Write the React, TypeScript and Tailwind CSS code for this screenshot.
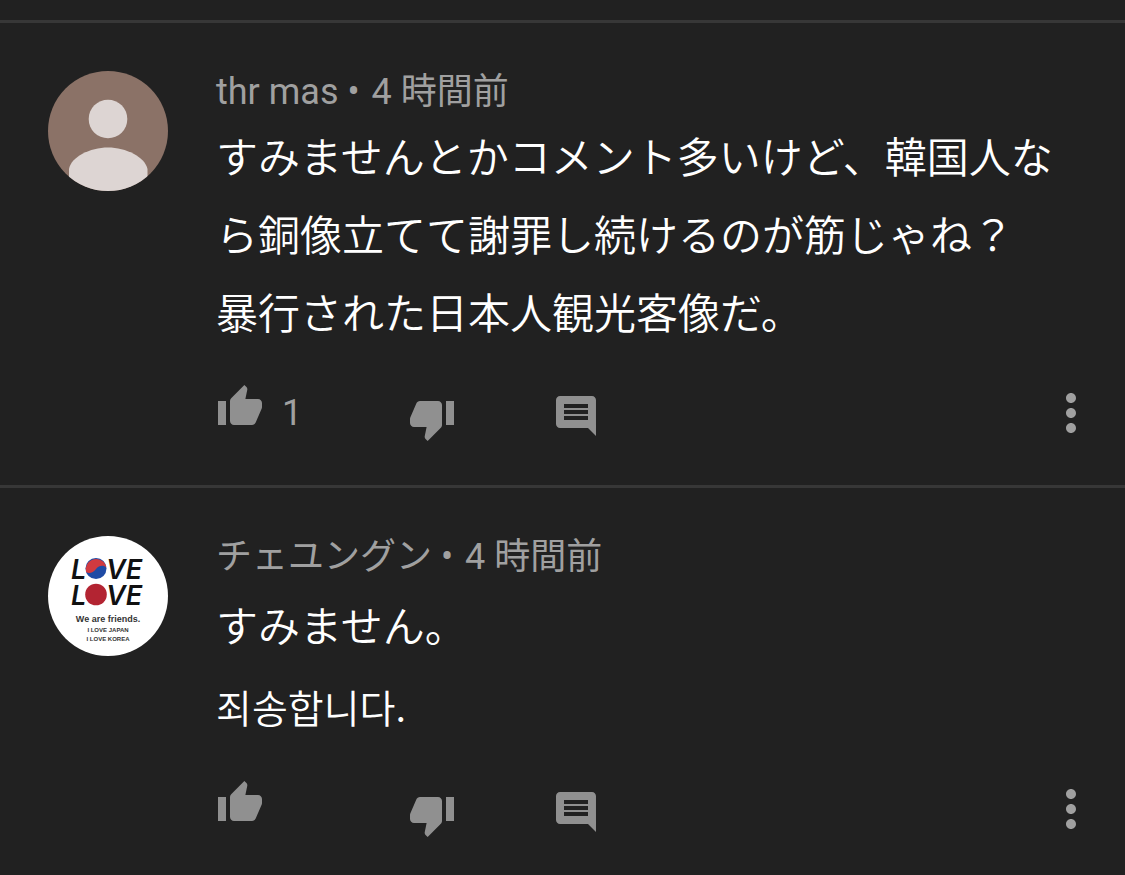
import type { ReactNode } from "react";

type CommentData = {
  id: string;
  author: string;
  time: string;
  likes?: number;
  avatar: ReactNode;
  body: ReactNode;
};

function DefaultAvatar() {
  return (
    <svg viewBox="0 0 120 120" className="block size-full" role="img" aria-label="thr mas">
      <rect width="120" height="120" fill="#8b7267" />
      <circle cx="60" cy="48" r="19.3" fill="#ddd5d3" />
      <path
        d="M21 120V98C23 86 42 76.500 60 76.500S97 86 99.500 98V120Z"
        fill="#ddd5d3"
      />
    </svg>
  );
}

function LoveAvatar() {
  return (
    <svg
      viewBox="0 0 120 120"
      className="block size-full font-['Liberation_Sans',sans-serif]"
      role="img"
      aria-label="チェユングン"
    >
      <rect width="120" height="120" fill="#fff" />
      <g
        fill="#111"
        className="font-['Inter',sans-serif]"
        fontSize="27"
        fontWeight="600"
        fontStyle="italic"
      >
        <text x="23" y="43">L</text>
        <text x="58" y="43">VE</text>
        <text x="23" y="69">L</text>
        <text x="58" y="69">VE</text>
      </g>
      <circle cx="48" cy="32.500" r="10.500" fill="#1f4ba5" />
      <path
        d="M38 36A10.500 10.500 0 1 1 58.500 31.500C56 29 51 29 48 33C45 37 41 38 38 36Z"
        fill="#d13a40"
      />
      <circle cx="48" cy="58.500" r="10.800" fill="#b32432" />
      <g fill="#333" textAnchor="middle" fontWeight="700">
        <text x="60" y="86" fontSize="9">We are friends.</text>
        <text x="60" y="96" fontSize="6">I LOVE JAPAN</text>
        <text x="60" y="105" fontSize="6">I LOVE KOREA</text>
      </g>
    </svg>
  );
}

function Icon({ d }: { d: string }) {
  return (
    <svg viewBox="0 0 24 24" className="block size-full" fill="currentColor" aria-hidden="true">
      <path d={d} />
    </svg>
  );
}

const THUMB_UP =
  "M1 21h4V9H1v12zm22-11c0-1.100-.9-2-2-2h-6.310l.95-4.570.03-.32c0-.41-.17-.79-.44-1.060L14.170 1 7.590 7.590C7.220 7.950 7 8.450 7 9v10c0 1.100.9 2 2 2h9c.83 0 1.540-.5 1.840-1.220l3.020-7.050c.09-.23.14-.47.14-.73v-2z";
const THUMB_DOWN =
  "M15 3H6c-.83 0-1.540.5-1.840 1.220l-3.020 7.050c-.09.23-.14.47-.14.73v2c0 1.100.9 2 2 2h6.310l-.95 4.570-.03.32c0 .41.17.79.44 1.060L9.830 23l6.590-6.590c.36-.36.58-.86.58-1.410V5c0-1.100-.9-2-2-2zm4 0v12h4V3h-4z";
const COMMENT =
  "M21.990 4c0-1.100-.89-2-1.990-2H4c-1.100 0-2 .9-2 2v12c0 1.100.9 2 2 2h14l4 4-.01-18zM18 14H6v-2h12v2zm0-3H6V9h12v2zm0-3H6V6h12v2z";
const MORE =
  "M12 8c1.100 0 2-.9 2-2s-.9-2-2-2-2 .9-2 2 .9 2 2 2zm0 2c-1.100 0-2 .9-2 2s.9 2 2 2 2-.9 2-2-.9-2-2-2zm0 6c-1.100 0-2 .9-2 2s.9 2 2 2 2-.9 2-2-.9-2-2-2z";

function Comment({ author, time, likes, avatar, body }: CommentData) {
  return (
    <article className="flex gap-12 border-t-[3px] border-[#373737] px-12 pt-12 pb-[42px]">
      <div className="size-[120px] shrink-0 overflow-hidden rounded-full">{avatar}</div>
      <div className="min-w-0 flex-1">
        <header className="h-[49px] text-[36px] leading-[43px] text-[#a0a0a0]">
          {author} <span className="mr-[3px]">•</span> {time}
        </header>
        {body}
        <div className="mt-[29px] -mr-6 flex h-[60px] items-start text-[#909090]">
          <div className="flex w-48 items-start gap-[18px]">
            <button type="button" aria-label="高く評価" className="size-12">
              <Icon d={THUMB_UP} />
            </button>
            {likes !== undefined && (
              <span className="pt-1 text-[36px] leading-[52px] text-[#a0a0a0]">{likes}</span>
            )}
          </div>
          <button type="button" aria-label="低く評価" className="mt-3 size-12">
            <Icon d={THUMB_DOWN} />
          </button>
          <button type="button" aria-label="返信" className="mt-[9px] ml-24 size-12">
            <Icon d={COMMENT} />
          </button>
          <button type="button" aria-label="その他" className="ml-auto size-[60px] text-[#a0a0a0]">
            <Icon d={MORE} />
          </button>
        </div>
      </div>
    </article>
  );
}

const comments: CommentData[] = [
  {
    id: "thr-mas",
    author: "thr mas",
    time: "4 時間前",
    likes: 1,
    avatar: <DefaultAvatar />,
    body: (
      <p className="text-[42px] leading-[78px] font-[350]">
        すみませんとかコメント多いけど、韓国人なら銅像立てて謝罪し続けるのが筋じゃね？
        <br />
        暴行された日本人観光客像だ。
      </p>
    ),
  },
  {
    id: "choe",
    author: "チェユングン",
    time: "4 時間前",
    avatar: <LoveAvatar />,
    body: (
      <div className="pt-1 pb-[5px] leading-[78px] font-[350]">
        <p className="text-[42px]">すみません。</p>
        <p lang="ko" className="font-['Noto_Sans_CJK_KR',sans-serif] text-[39px]">
          죄송합니다.
        </p>
      </div>
    ),
  },
];

export default function App() {
  return (
    <main
      lang="ja"
      className="min-h-screen bg-[#212121] pt-5 font-[Roboto,'Noto_Sans_CJK_JP',sans-serif] text-white"
    >
      {comments.map((comment) => (
        <Comment key={comment.id} {...comment} />
      ))}
    </main>
  );
}
